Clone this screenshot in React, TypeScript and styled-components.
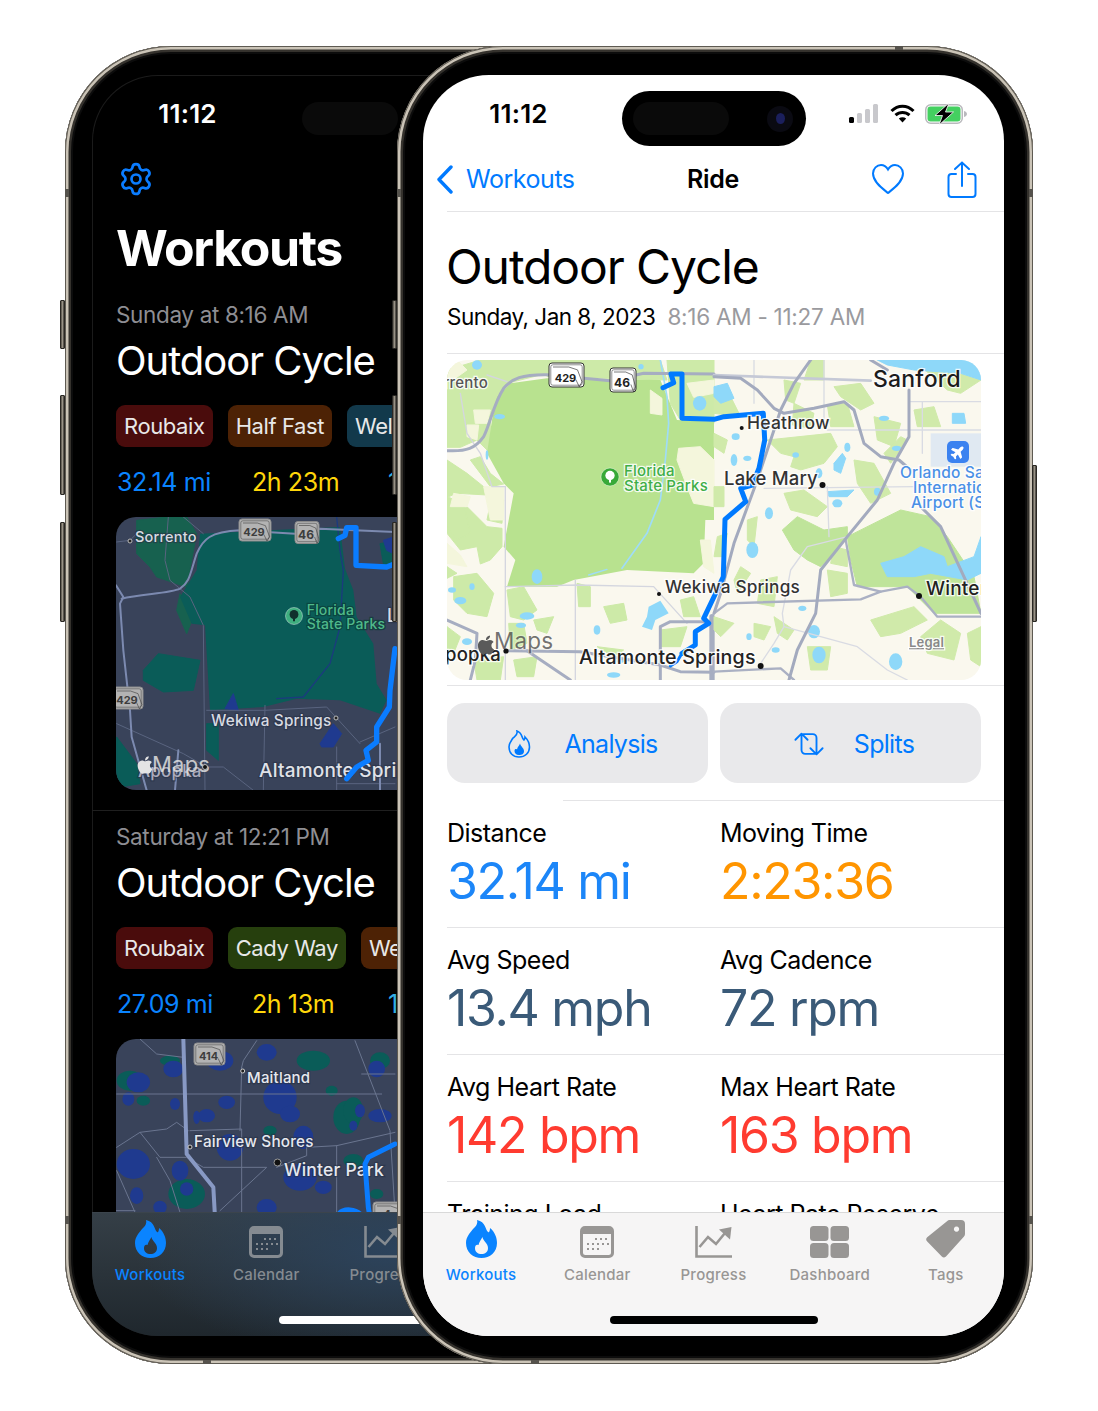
import React from 'react';
import styled, { createGlobalStyle } from 'styled-components';
import { Settings } from 'lucide-react';
import { FaApple, FaPlane } from 'react-icons/fa';

const BLUE = '#007aff';
const FONT = 'Inter, "Noto Sans", "Liberation Sans", sans-serif';

const GlobalStyle = createGlobalStyle`
    html, body {
        margin: 0;
        background: #fff;
    }
    #root {
        width: 1098px;
        height: 1411px;
        overflow: hidden;
    }
    * {
        box-sizing: border-box;
    }
`;

const Stage = styled.main`
    display: flex;
    width: 1098px;
    height: 1411px;
    padding: 46px 0 0 65px;
    background: #fff;
    font-family: ${FONT};
`;

const Phone = styled.section<{ $front?: boolean }>`
    position: relative;
    flex: 0 0 636px;
    height: 1318px;
    margin-left: ${(p) => (p.$front ? '-304px' : '0')};
    padding: 29px 0 28px ${(p) => (p.$front ? '26px' : '27px')};
    border-radius: 106px;
    background: #000;
    box-shadow: inset 0 0 0 1px #5e5a52, inset 0 0 0 3.5px #cbc4b7,
        inset 0 0 0 6px #35322d, inset 0 0 0 8px #0c0c0c;
`;

const SideButton = styled.i<{ $right?: boolean; $top: number; $h: number }>`
    position: absolute;
    top: ${(p) => p.$top}px;
    ${(p) => (p.$right ? 'right: -4px;' : 'left: -5px;')}
    width: 5px;
    height: ${(p) => p.$h}px;
    border-radius: 1px;
    background: linear-gradient(90deg, #45413a, #a29b8e 45%, #3a3733);
    border: 1px solid #2a2824;
`;

const Band = styled.i<{ $x?: number; $y?: number; $right?: boolean; $bottom?: boolean }>`
    position: absolute;
    background: #55524c;
    ${(p) =>
        p.$x !== undefined
            ? `left: ${p.$x}px; width: 8px; height: 4px; ${p.$bottom ? 'bottom: 0;' : 'top: 0;'}`
            : `top: ${p.$y}px; height: 8px; width: 4px; ${p.$right ? 'right: 0;' : 'left: 0;'}`}
`;

const Screen = styled.div<{ $dark?: boolean }>`
    display: flex;
    flex-direction: column;
    width: 581px;
    height: 1261px;
    border-radius: 66px;
    overflow: hidden;
    background: ${(p) => (p.$dark ? '#000' : '#fff')};
    color: ${(p) => (p.$dark ? '#fff' : '#000')};
    ${(p) => p.$dark && 'box-shadow: inset 0 0 0 1px #1b1b1b;'}
`;

const StatusBar = styled.header`
    flex: 0 0 72px;
    display: grid;
    grid-template-columns: 199px 184px 1fr;
    padding-top: 16px;
`;

const Clock = styled.div`
    height: 55px;
    padding-right: 8px;
    text-align: center;
    font-size: 26px;
    font-weight: 600;
    line-height: 46px;
    letter-spacing: 0.2px;
`;

const Island = styled.div`
    display: flex;
    align-items: center;
    justify-content: space-between;
    height: 55px;
    padding: 0 13px 0 11px;
    border-radius: 28px;
    background: #000;
`;

const IslandPill = styled.span`
    width: 96px;
    height: 33px;
    border-radius: 17px;
    background: #0a0a0a;
`;

const Camera = styled.span`
    display: flex;
    align-items: center;
    justify-content: center;
    width: 26px;
    height: 26px;
    border-radius: 50%;
    background: #0a0a12;
`;

const Lens = styled.span`
    width: 9px;
    height: 11px;
    border-radius: 50%;
    background: #1b1f5c;
`;

const StatusIcons = styled.div`
    display: flex;
    align-items: flex-start;
    gap: 12px;
    padding: 13px 0 0 43px;
    svg {
        overflow: visible;
    }
`;

const WifiWrap = styled.span`
    display: block;
    margin-right: -2px;
`;

const NavBar = styled.nav`
    flex: 0 0 64px;
    display: grid;
    grid-template-columns: 251px auto 1fr;
    align-items: center;
    height: 64px;
    padding: 0 27px 0 13px;
`;

const BackLink = styled.div`
    display: flex;
    align-items: center;
    gap: 13px;
    color: ${BLUE};
    font-size: 25px;
    letter-spacing: -0.45px;
`;

const NavTitle = styled.div`
    font-size: 25px;
    font-weight: 600;
    letter-spacing: -0.3px;
`;

const NavActions = styled.div`
    display: flex;
    justify-content: flex-end;
    align-items: center;
    gap: 43px;
`;

const Divider = styled.hr<{ $inset?: number }>`
    flex: 0 0 1px;
    width: auto;
    height: 1px;
    margin: 0 0 0 ${(p) => p.$inset ?? 24}px;
    border: 0;
    background: #e4e4e6;
`;

const Body = styled.div`
    flex: 1;
    min-height: 0;
    display: flex;
    flex-direction: column;
    overflow: hidden;
`;

const Heading = styled.div`
    padding: 26px 24px 21px;
`;

const PageTitle = styled.h1`
    margin: 0 0 0 -1px;
    font-size: 48px;
    font-weight: 400;
    line-height: 58px;
    letter-spacing: -1.1px;
`;

const DateLine = styled.div`
    display: flex;
    gap: 12px;
    margin-top: 6px;
    font-size: 22.5px;
    line-height: 30px;
    letter-spacing: -0.53px;
`;

const Muted = styled.span`
    color: #9a9a9e;
    letter-spacing: -0.25px;
`;

const MapSection = styled.div`
    padding: 6px 23px 5px 24px;
`;

const MapFrame = styled.div<{ $h: number }>`
    flex-shrink: 0;
    width: 534px;
    height: ${(p) => p.$h}px;
    border-radius: 20px;
    overflow: hidden;
    svg {
        display: block;
    }
`;

const MapText = styled.text<{ $size: number; $fill?: string; $halo?: string; $weight?: number }>`
    font-family: ${FONT};
    font-size: ${(p) => p.$size}px;
    font-weight: ${(p) => p.$weight ?? 500};
    fill: ${(p) => p.$fill ?? '#222'};
    stroke: ${(p) => p.$halo ?? 'rgba(255,255,255,.85)'};
    stroke-width: 2.5px;
    paint-order: stroke;
    letter-spacing: 0.2px;
`;

const ActionRow = styled.div`
    display: grid;
    grid-template-columns: 261px 261px;
    gap: 12px;
    padding: 17px 24px;
`;

const ActionButton = styled.button`
    display: flex;
    align-items: center;
    justify-content: center;
    gap: 30px;
    height: 80px;
    padding: 1px 0 0 7px;
    border: 0;
    border-radius: 18px;
    background: #e9e9eb;
    color: ${BLUE};
    font-family: ${FONT};
    font-size: 25px;
    letter-spacing: -0.7px;
`;

const IconSlot = styled.span`
    display: flex;
    justify-content: center;
    width: 30px;
`;

const StatRow = styled.div`
    flex-shrink: 0;
    display: grid;
    grid-template-columns: 273px 1fr;
    height: 126px;
    padding: 16px 0 0 24px;
`;

const StatLabel = styled.div`
    font-size: 25px;
    line-height: 32px;
    letter-spacing: -0.5px;
`;

const StatValue = styled.div<{ $color: string }>`
    margin-top: 2px;
    color: ${(p) => p.$color};
    font-size: 50px;
    line-height: 60px;
    letter-spacing: -1.3px;
`;

const TabBar = styled.footer<{ $dark?: boolean }>`
    flex: 0 0 124px;
    display: flex;
    flex-direction: column;
    border-top: 1px solid ${(p) => (p.$dark ? '#3b444c' : '#d9d9d9')};
    background: ${(p) =>
        p.$dark
            ? 'radial-gradient(ellipse 260px 110px at 52% 30%, #2c435c, transparent), linear-gradient(180deg, #353f47, #1f272d)'
            : '#f6f5f5'};
`;

const TabRow = styled.div`
    display: grid;
    grid-template-columns: repeat(5, 1fr);
    padding-top: 7px;
`;

const Tab = styled.div<{ $active?: boolean; $dark?: boolean }>`
    display: flex;
    flex-direction: column;
    align-items: center;
    color: ${(p) => (p.$active ? '#0a84ff' : p.$dark ? '#858b91' : '#989694')};
    font-size: 15px;
    font-weight: 500;
    letter-spacing: 0.25px;
`;

const TabIcon = styled.span`
    display: flex;
    align-items: flex-end;
    height: 38px;
    margin-bottom: 7px;
`;

const TabLabel = styled.span`
    line-height: 20px;
`;

const HomeBar = styled.div<{ $dark?: boolean }>`
    width: 208px;
    height: 8px;
    margin: auto auto 12px;
    border-radius: 4px;
    background: ${(p) => (p.$dark ? '#fff' : '#000')};
`;

const GearRow = styled.div`
    flex-shrink: 0;
    height: 34px;
    margin: 14px 0 0 26px;
    color: #0a7cff;
`;

const BigTitle = styled.h1`
    flex-shrink: 0;
    margin: 24px 0 11px 24px;
    font-size: 50px;
    font-weight: 700;
    line-height: 58px;
    letter-spacing: -1.35px;
`;

const Card = styled.article<{ $first?: boolean }>`
    flex-shrink: 0;
    padding: 12px 0 20px 24px;
    border-top: 1px solid ${(p) => (p.$first ? 'transparent' : '#1f1f1f')};
`;

const CardDate = styled.div`
    color: #8e8e93;
    font-size: 22.5px;
    line-height: 28px;
    letter-spacing: -0.35px;
`;

const CardTitle = styled.h2`
    margin: 7px 0 0;
    font-size: 40px;
    font-weight: 400;
    line-height: 50px;
    letter-spacing: -1.05px;
`;

const TagRow = styled.div`
    display: flex;
    gap: 15px;
    margin-top: 19px;
    width: 700px;
`;

const Tag = styled.span<{ $bg: string }>`
    height: 42px;
    padding: 0 8px;
    border-radius: 9px;
    background: ${(p) => p.$bg};
    color: #e8e8e8;
    font-size: 22px;
    line-height: 42px;
    letter-spacing: -0.4px;
`;

const CardStats = styled.div`
    display: grid;
    grid-template-columns: 135px 136px auto;
    margin: 20px 0;
    width: 600px;
    font-size: 25px;
    line-height: 30px;
    letter-spacing: -0.4px;
`;

const CardStat = styled.span<{ $color: string }>`
    padding-left: 1px;
    color: ${(p) => p.$color};
`;

// map traced from the reference, in zoomed coordinates (3x the map size)
type Ellipse = [number, number, number, number];

const Polys = ({ items, fill }: { items: string[]; fill: string }) => (
    <>
        {items.map((points) => (
            <polygon key={points} points={points} fill={fill} stroke={fill} strokeWidth={3} strokeLinejoin="round" />
        ))}
    </>
);

const Blobs = ({ items, fill }: { items: Ellipse[]; fill: string }) => (
    <>
        {items.map(([cx, cy, rx, ry]) => (
            <ellipse key={`${cx}-${cy}`} cx={cx} cy={cy} rx={rx} ry={ry} fill={fill} />
        ))}
    </>
);

const Roads = ({ items, stroke, width }: { items: string[]; stroke: string; width: number }) => (
    <>
        {items.map((d) => (
            <path key={d} d={d} fill="none" stroke={stroke} strokeWidth={width} strokeLinejoin="round" strokeLinecap="round" />
        ))}
    </>
);

function Shield({ x, y, w, h, label, dark }: { x: number; y: number; w: number; h: number; label: string; dark?: boolean }) {
    const ink = dark ? '#3d3d3d' : '#222';
    return (
        <g>
            <rect x={x} y={y} width={w} height={h} rx={3} fill={dark ? '#b3b3b3' : '#fff'} stroke={dark ? '#8a8a8a' : '#333'} strokeWidth={1} />
            <rect x={x + 1.8} y={y + 1.8} width={w - 3.6} height={h - 3.6} rx={2} fill="none" stroke={ink} strokeWidth={0.5} />
            <path
                d={`M${x + 4} ${y + 4} h${w * 0.45} l${w * 0.25} ${h * 0.12} l${w * 0.13} ${h * 0.5} l${-w * 0.08} ${h * 0.2} l${-w * 0.1} ${-h * 0.3}`}
                fill="none"
                stroke={ink}
                strokeWidth={0.6}
            />
            <text
                x={x + w / 2 - 1}
                y={y + h - 5}
                textAnchor="middle"
                fontFamily={FONT}
                fontSize={label.length > 2 ? 11 : 12}
                fontWeight={700}
                fill={ink}
            >
                {label}
            </text>
        </g>
    );
}

function ParkIcon({ cx, cy, r, bg, tree }: { cx: number; cy: number; r: number; bg: string; tree: string }) {
    return (
        <g>
            <circle cx={cx} cy={cy} r={r} fill={bg} stroke="rgba(255,255,255,.5)" strokeWidth={0.8} />
            <circle cx={cx} cy={cy - 1.5} r={r * 0.52} fill={tree} />
            <rect x={cx - 1} y={cy} width={2} height={r * 0.62} fill={tree} />
        </g>
    );
}

const LIGHT_LEFT_GREEN = [
    '0,30 100,0 300,0 300,40 180,70 130,170 130,280 90,240 40,262 0,262',
    '300,0 640,0 660,60 300,50',
    '660,0 801,0 801,190 700,180 670,130',
    '100,290 130,340 170,372 130,380 70,300',
    '0,300 60,340 110,380 120,405 30,400 0,412',
    '0,460 60,440 120,500 165,505 165,560 130,600 100,612 90,560 40,570 0,520',
    '0,620 30,640 0,655',
    '20,650 90,640 140,700 120,770 60,760 20,720',
    '180,690 230,680 270,750 230,780 190,770',
    '185,790 230,790 240,850 190,870',
    '470,740 530,730 540,780 490,790',
    '390,670 430,680 430,740 395,740',
    '640,810 720,800 700,860 640,860',
    '0,800 40,830 20,880 0,870',
    '80,900 170,890 160,960 90,960',
    '450,860 530,870 500,890',
    '0,410 50,430 70,520 30,540 0,500',
    '130,430 170,420 165,490 120,480',
    '700,720 740,710 760,770 710,770',
    '260,780 320,770 300,820 270,810',
    '200,900 270,890 260,950 210,950',
];

const PARK_LEFT =
    '150,110 190,70 300,55 640,60 690,180 801,185 801,480 775,480 770,610 740,640 540,630 380,660 330,680 180,680 205,600 170,560 200,400 170,370 120,280 135,180';

const CREAM_LEFT = [
    '720,70 801,60 801,100 740,112',
    '610,90 645,115 645,165 610,160',
    '695,265 760,260 801,300 801,440 740,430 720,380 690,300',
    '80,150 130,150 120,190 85,190',
    '760,540 790,540 801,640 770,620',
    '20,400 70,410 60,440 10,440',
    '110,380 170,380 170,480 130,480',
    '0,0 30,0 60,30 25,55 0,60',
    '60,195 95,195 90,240 60,230',
    '0,550 40,585 60,620 0,610',
];

const WATER_LEFT: Ellipse[] = [
    [90, 15, 15, 14],
    [158, 170, 16, 8],
    [120, 285, 4, 14],
    [270, 650, 16, 22],
    [450, 810, 10, 14],
    [40, 722, 18, 11],
    [75, 680, 8, 10],
    [240, 768, 22, 11],
    [222, 796, 15, 8],
    [60, 845, 15, 10],
    [520, 902, 12, 6],
    [500, 945, 20, 8],
    [758, 130, 20, 22],
    [582, 20, 8, 8],
    [15, 690, 12, 8],
];

const GREEN_RIGHT = [
    '290,0 330,0 330,60 270,60',
    '360,80 440,70 480,130 440,150 380,110',
    '160,240 350,220 370,260 330,310 260,330 230,320 240,290 200,280',
    '210,400 270,390 340,440 310,470 230,450',
    '420,300 480,310 530,400 470,430 430,370',
    '600,0 801,60 740,100 700,90',
    '470,780 600,740 640,780 560,820 500,830',
    '680,780 740,820 720,900 640,880 620,830',
    '760,820 801,800 801,920 770,900',
    '340,630 400,640 400,700 350,710',
    '0,100 50,110 80,170 0,160',
    '0,220 40,240 30,280 0,260',
    '0,380 30,380 30,440 0,440',
    '180,770 240,810 220,840 190,820',
    '280,860 350,860 340,930 290,930',
    '600,150 660,140 680,200 610,200',
    '100,480 130,470 120,560 100,540',
    '0,770 60,790 20,830 0,810',
    '480,170 560,190 540,260 490,240',
    '120,790 170,800 150,840 120,830',
    '210,60 260,70 240,130 215,120',
    '340,135 400,130 420,200 350,200',
    '240,130 300,160 290,205 235,195',
    '560,230 580,240 530,310 510,280',
    '80,620 110,640 70,700 60,660',
    '140,660 190,650 180,740 130,730',
    '360,560 400,570 400,620 350,610',
    '10,530 40,520 30,590 0,590',
];

const PARK_RIGHT = [
    '400,530 560,450 650,470 700,530 780,650 801,760 660,760 610,710 580,680 430,680 410,600',
    '250,470 330,510 400,500 400,530 370,570 320,620 280,600 240,570 205,510',
];

const WATER_RIGHT_POLYS = [
    '490,0 780,0 801,20 801,60 740,40 600,30 520,15',
    '500,610 570,590 620,560 690,590 700,620 780,590 801,530 801,640 760,660 650,640 600,650 520,650',
    '0,80 40,70 60,115 20,130 0,110',
    '360,310 385,280 395,295 380,340 360,330',
    '340,395 420,390 400,410 345,410',
    '715,160 750,160 755,190 715,190',
];

const WATER_RIGHT: Ellipse[] = [
    [400, 262, 9, 14],
    [510, 175, 15, 8],
    [370, 430, 15, 12],
    [300, 815, 18, 20],
    [265, 745, 12, 8],
    [115, 570, 18, 24],
    [165, 460, 12, 18],
    [65, 230, 12, 10],
    [60, 300, 10, 18],
    [100, 295, 12, 8],
    [545, 905, 20, 25],
    [315, 885, 20, 25],
    [105, 830, 8, 10],
    [185, 870, 12, 8],
    [490, 395, 10, 12],
    [245, 285, 10, 8],
    [315, 340, 10, 15],
    [548, 265, 14, 8],
];

const ROUTE_MAIN =
    '216,27.7 226.7,22.7 224,14 235,14 235,58.3 267,59.3 277,56.7 316.3,53.3 317.7,80 312,108.3 305.3,125 293.7,128.3 298.7,141.7 278,159.3 276.3,216.7 267,236.7 256.7,258.3 261.7,263.3 248.3,271.7 248.3,285 235,293.3';

function SummaryMap() {
    return (
        <svg width={534} height={320} viewBox="0 0 534 320">
            <rect width={534} height={320} fill="#faf8ee" />
            <g transform="scale(0.33333)">
                <Polys items={LIGHT_LEFT_GREEN} fill="#cdeaa8" />
                <polygon points={PARK_LEFT} fill="#b8e28f" />
                <Polys items={CREAM_LEFT} fill="#f4f6dc" />
                <Blobs items={WATER_LEFT} fill="#8ed8f9" />
                <polygon points="605,740 640,722 665,760 625,780 615,810 585,800 600,770" fill="#8ed8f9" />
                <Roads items={['M640 0 L660 110 L665 190 L655 300 L640 420 L600 520 L525 625']} stroke="#9fdcf8" width={5} />
                <Roads items={['M425 645 L480 628']} stroke="#9fdcf8" width={4} />
                <Roads
                    items={[
                        'M175 380 L175 960',
                        'M175 680 L390 675 L620 680 L720 790',
                        'M385 660 L385 960',
                        'M40 100 L60 220 L100 280 L135 380 L175 380',
                        'M120 45 L180 65',
                    ]}
                    stroke="#d4d6df"
                    width={4}
                />
                <Roads
                    items={[
                        'M0 272 C60 275 85 265 110 230 C130 190 140 130 170 85 C195 55 225 43 300 44 L490 62 L590 40 L801 42',
                        'M0 780 L90 820 L85 900 L70 960',
                        'M180 872 L400 875 L640 915 L700 935 L801 937',
                        'M240 872 L370 960',
                        'M640 960 L640 800 L670 785 L790 785',
                    ]}
                    stroke="#a6adc1"
                    width={9}
                />
                <Roads items={['M795 770 L795 960']} stroke="#a6adc1" width={16} />
            </g>
            <g transform="translate(267 0) scale(0.33333)">
                <Polys items={GREEN_RIGHT} fill="#d0eaaa" />
                <Polys items={PARK_RIGHT} fill="#bfe49a" />
                <rect x={650} y={220} width={151} height={100} fill="#e0e9f2" />
                <Polys items={WATER_RIGHT_POLYS} fill="#8ed8f9" />
                <Blobs items={WATER_RIGHT} fill="#8ed8f9" />
                <Roads
                    items={[
                        'M150 385 L600 380',
                        'M340 210 L801 210',
                        'M625 125 L625 280',
                        'M590 125 L801 125',
                        'M400 530 L280 560 L230 630 L205 760 L210 800 L180 850 L140 910',
                        'M210 800 L430 860 L520 930 L580 960',
                        'M330 0 L330 180',
                        'M120 0 L120 130',
                        'M340 380 L345 530',
                    ]}
                    stroke="#d9dbe3"
                    width={4}
                />
                <Roads items={['M0 45 L470 62']} stroke="#c5c9d6" width={8} />
                <Roads
                    items={[
                        'M395 540 L420 675 L500 695 L580 680 L620 710 L670 770 L801 770',
                        'M0 760 L40 730 L440 718 L500 695',
                        'M0 935 L200 925 L240 960',
                    ]}
                    stroke="#aab0c3"
                    width={7}
                />
                <Roads
                    items={[
                        'M0 50 L80 55 L130 90 L180 145 L210 160 L300 145 L390 125 L420 150 L450 250 L500 290 L555 300 L590 330',
                        'M290 0 L240 70 L200 150 L130 360 L60 550 L20 700 L0 760',
                        'M585 90 L585 230 L540 310 L490 420 L400 530 L320 630 L305 760 L250 870 L225 960',
                        'M620 440 L680 500 L801 760',
                        'M470 0 L520 30',
                    ]}
                    stroke="#a3aabe"
                    width={9}
                />
            </g>
            <polyline points={ROUTE_MAIN} fill="none" stroke={BLUE} strokeWidth={5} strokeLinejoin="round" strokeLinecap="round" />
            <polyline points="235,293.3 230,301.7 223.3,306" fill="none" stroke={BLUE} strokeWidth={3} strokeLinecap="round" />
            <Shield x={102} y={3} w={35} h={24} label="429" />
            <Shield x={163} y={8} w={26} h={24} label="46" />
            <MapText x={41} y={28} $size={15} $fill="#555" textAnchor="end">Sorrento</MapText>
            <MapText x={426} y={27} $size={23} $fill="#1c1c1c" $weight={500}>Sanford</MapText>
            <MapText x={300} y={69} $size={17.5} $fill="#333">Heathrow</MapText>
            <MapText x={277} y={125} $size={18.5} $fill="#333">Lake Mary</MapText>
            <MapText x={177} y={116} $size={15} $fill="#3fae47">Florida</MapText>
            <MapText x={177} y={131} $size={15} $fill="#3fae47">State Parks</MapText>
            <ParkIcon cx={163} cy={117} r={9} bg="#38a938" tree="#fff" />
            <MapText x={218} y={233} $size={17.2} $fill="#333">Wekiwa Springs</MapText>
            <MapText x={132} y={304} $size={19.6} $fill="#222">Altamonte Springs</MapText>
            <MapText x={54} y={301} $size={18.5} $fill="#222" textAnchor="end">Apopka</MapText>
            <MapText x={453} y={118} $size={15.5} $fill="#4a90e6">Orlando Sanford</MapText>
            <MapText x={466} y={133} $size={15.5} $fill="#4a90e6">International</MapText>
            <MapText x={464} y={148} $size={15.5} $fill="#4a90e6">Airport (SFB)</MapText>
            <MapText x={479} y={235} $size={19} $fill="#222">Winter Springs</MapText>
            <MapText x={462} y={287} $size={13} $fill="#888" textDecoration="underline" $weight={600}>Legal</MapText>
            <FaApple x={28} y={274} size={22} color="#5a5a5a" />
            <MapText x={47} y={289} $size={22.5} $fill="rgba(70,70,70,.75)" $halo="rgba(255,255,255,.3)" $weight={400}>Maps</MapText>
            <circle cx={212} cy={234} r={2} fill="#111" />
            <circle cx={294.7} cy={68} r={2} fill="#111" />
            <circle cx={375.5} cy={125} r={3} fill="#111" />
            <circle cx={313.7} cy={306} r={3} fill="#111" />
            <circle cx={472} cy={236} r={3} fill="#111" />
            <circle cx={59} cy={291} r={2.6} fill="#111" />
            <rect x={500} y={81} width={22} height={22} rx={5} fill="#3b82f0" />
            <g transform="rotate(-45 511 92)">
                <FaPlane x={503.5} y={84.5} size={15} color="#fff" />
            </g>
        </svg>
    );
}

const DARK_ROAD = '#7c8ab0';
const DARK_THIN = '#596480';
const DARK_WATER = '#1f3a8f';
const DARK_GREEN = '#0a5c58';
const DARK_HALO = 'rgba(40,50,70,.6)';

function DarkMapOne() {
    return (
        <svg width={534} height={273} viewBox="0 0 534 273">
            <rect width={534} height={273} fill="#39435a" />
            <g transform="translate(-16 -6.67) scale(0.33333)">
                <Polys
                    items={[
                        '110,30 200,20 260,20 290,70 260,230 170,200 150,170 110,130',
                        '240,250 280,320 260,370 230,300',
                    ]}
                    fill="#17614f"
                />
                <polygon
                    points="300,70 720,50 735,175 760,240 770,320 820,400 830,520 860,570 840,610 720,570 590,565 490,590 330,600 315,345 275,340 240,260 290,180"
                    fill={DARK_GREEN}
                />
                <Polys
                    items={[
                        '130,480 175,430 300,450 280,540 190,545 130,510',
                        '320,640 355,640 355,750 320,720',
                        '50,680 110,760 120,820 60,830 50,790',
                        '840,100 885,90 885,170 850,160',
                    ]}
                    fill={DARK_GREEN}
                />
                <Polys
                    items={['375,595 400,550 415,600', '660,700 700,640 725,670 700,710 665,710', '850,90 880,80 880,130 860,120']}
                    fill={DARK_WATER}
                />
                <Roads items={['M710 20 L720 120 L730 180 L720 350 L690 460 L610 560 L530 565']} stroke="#1b3b7e" width={4} />
                <Roads
                    items={[
                        'M50 95 L90 90 L110 70',
                        'M205 20 L195 150 L210 210 L270 260 L310 345 L315 840',
                        'M320 600 L495 600 L680 590 L780 700',
                        'M495 585 L490 840',
                        'M50 640 L250 730 L320 770 L370 770 L460 840',
                        'M710 710 L710 840',
                        'M780 695 L885 650',
                        'M710 820 L885 820',
                        'M250 20 L310 70',
                    ]}
                    stroke={DARK_THIN}
                    width={3}
                />
                <Roads
                    items={[
                        'M48 225 L70 260 L60 280 L70 420 L90 600 L95 680 L140 840',
                        'M65 265 C120 250 210 250 240 235 C270 215 270 190 290 130 C310 85 330 65 420 60 L585 70 L660 55 L885 65',
                        'M840 700 L840 840',
                        'M225 840 L235 720',
                    ]}
                    stroke={DARK_ROAD}
                    width={6}
                />
            </g>
            <Shield dark x={123} y={2} w={32} h={22} label="429" />
            <Shield dark x={179} y={4.5} w={24} h={22} label="46" />
            <Shield dark x={-3} y={170} w={30} h={22} label="429" />
            <MapText x={19} y={25} $size={14.5} $fill="#d8dbe2" $halo={DARK_HALO}>Sorrento</MapText>
            <circle cx={14} cy={24} r={2} fill="#222" stroke="#bbb" />
            <ParkIcon cx={178} cy={99} r={8.5} bg="#3fae7f" tree="#10302c" />
            <MapText x={190.7} y={98} $size={14} $fill="#50b98a" $halo="rgba(10,60,55,.7)">Florida</MapText>
            <MapText x={190.7} y={112} $size={14} $fill="#50b98a" $halo="rgba(10,60,55,.7)">State Parks</MapText>
            <MapText x={271} y={105} $size={18} $fill="#d8dbe2" $halo={DARK_HALO}>Lake Mary</MapText>
            <MapText x={95} y={209} $size={15.3} $fill="#d8dbe2" $halo={DARK_HALO}>Wekiwa Springs</MapText>
            <circle cx={220} cy={201} r={2} fill="#222" stroke="#bbb" />
            <MapText x={143} y={260} $size={19} $fill="#e0e2e8" $halo={DARK_HALO}>Altamonte Springs</MapText>
            <MapText x={22} y={260} $size={17} $fill="#aab" $halo={DARK_HALO}>Apopka</MapText>
            <FaApple x={19} y={238} size={20} color="#e4e4e4" />
            <MapText x={36} y={255} $size={22} $fill="rgba(225,225,225,.85)" $halo="transparent" $weight={400}>Maps</MapText>
            <circle cx={89} cy={250} r={2.5} fill="#111" stroke="#bbb" />
            <g transform="translate(-16 -6.67) scale(0.33333)">
                <Roads
                    items={[
                        'M715 85 L735 75 L740 52 L768 52 L768 165 L860 170 L885 160',
                        'M885 415 L870 540 L868 590 L830 650 L830 695 L798 720 L805 750 L770 770 L740 805',
                    ]}
                    stroke="#0a7cff"
                    width={16}
                />
            </g>
        </svg>
    );
}

const DARK_TWO_WATER: Ellipse[] = [
    [235, 155, 35, 30],
    [340, 115, 30, 25],
    [480, 90, 40, 30],
    [620, 65, 30, 25],
    [660, 200, 50, 50],
    [690, 250, 30, 25],
    [205, 205, 18, 20],
    [345, 220, 15, 18],
    [500, 215, 25, 20],
    [440, 255, 25, 20],
    [410, 260, 10, 20],
    [510, 350, 40, 40],
    [220, 400, 50, 45],
    [360, 420, 25, 30],
    [730, 320, 30, 35],
    [720, 440, 50, 40],
    [790, 470, 25, 20],
    [620, 530, 30, 25],
    [300, 530, 20, 20],
    [230, 495, 20, 25],
    [950, 115, 25, 25],
    [960, 255, 35, 20],
    [900, 240, 15, 20],
    [880, 285, 12, 15],
    [380, 475, 20, 20],
];

const DARK_TWO_GREEN: Ellipse[] = [
    [760, 90, 50, 30],
    [210, 150, 40, 30],
    [250, 210, 20, 15],
    [860, 260, 40, 50],
    [880, 240, 30, 40],
    [380, 490, 55, 45],
    [815, 180, 18, 15],
    [630, 300, 20, 15],
    [330, 90, 30, 15],
    [960, 90, 30, 25],
    [880, 390, 30, 20],
    [950, 490, 20, 15],
];

function DarkMapTwo() {
    return (
        <svg width={534} height={273} viewBox="0 0 534 273">
            <rect width={534} height={273} fill="#39435a" />
            <g transform="translate(-56 -8.33) scale(0.33333)">
                <Blobs items={DARK_TWO_GREEN} fill={DARK_GREEN} />
                <Blobs items={DARK_TWO_WATER} fill={DARK_WATER} />
                <Roads
                    items={[
                        'M240 25 L290 70 L370 80',
                        'M170 190 L965 190',
                        'M390 300 L545 295 L545 545',
                        'M545 110 L540 300',
                        'M590 30 L550 90 L545 110',
                        'M170 350 L240 305 L320 295 L350 275 L385 300',
                        'M240 305 L300 380 L380 380 L430 410 L620 410 L480 540',
                        'M290 380 L330 450 L360 545',
                        'M170 420 L225 545',
                        'M885 30 L990 300 L1005 545',
                        'M740 350 L830 345 L1005 305',
                        'M740 345 L740 375 L650 410',
                        'M830 345 L830 545',
                        'M905 130 L1005 130',
                        'M168 540 L225 540',
                    ]}
                    stroke="#6a7590"
                    width={3}
                />
                <Roads items={['M370 25 L380 370 L460 470 L465 560']} stroke="#8899c4" width={12} />
            </g>
            <Shield dark x={78} y={4} w={31} h={22} label="414" />
            <Shield dark x={257} y={163} w={30} h={22} label="4" />
            <circle cx={126.7} cy={32} r={2} fill="#222" stroke="#ccc" />
            <MapText x={131} y={44} $size={15} $fill="#e6e8ee" $halo={DARK_HALO}>Maitland</MapText>
            <circle cx={74} cy={108} r={2} fill="#222" stroke="#ccc" />
            <MapText x={78} y={108} $size={15.3} $fill="#e6e8ee" $halo={DARK_HALO}>Fairview Shores</MapText>
            <circle cx={161.5} cy={123.5} r={3.5} fill="#111" stroke="#999" />
            <MapText x={168} y={137} $size={17.5} $fill="#e6e8ee" $halo={DARK_HALO}>Winter Park</MapText>
            <g transform="translate(-56 -8.33) scale(0.33333)">
                <Roads
                    items={['M1005 340 L925 380 L915 400 L925 530 L930 560', 'M835 552 C850 530 890 535 905 555']}
                    stroke="#0a7cff"
                    width={15}
                />
            </g>
        </svg>
    );
}

function WorkoutCard({
    first,
    date,
    tags,
    distance,
    time,
    map,
}: {
    first?: boolean;
    date: string;
    tags: [string, string][];
    distance: string;
    time: string;
    map: React.ReactNode;
}) {
    return (
        <Card $first={first}>
            <CardDate>{date}</CardDate>
            <CardTitle>Outdoor Cycle</CardTitle>
            <TagRow>
                {tags.map(([label, bg]) => (
                    <Tag key={label} $bg={bg}>
                        {label}
                    </Tag>
                ))}
            </TagRow>
            <CardStats>
                <CardStat $color="#0a84ff">{distance}</CardStat>
                <CardStat $color="#ffd60a">{time}</CardStat>
                <CardStat $color="#32ade6">1,250 ft</CardStat>
            </CardStats>
            <MapFrame $h={273}>{map}</MapFrame>
        </Card>
    );
}

function FlameIcon() {
    return (
        <svg width={31} height={38} viewBox="0 0 31 38">
            <path
                fill="currentColor"
                fillRule="evenodd"
                d="M11 0C20 2 19 9 22 12C23 13 24 11 24 8C29 12 31 18 31 23C31 32 24 38 15.5 38C7 38 0 32 0 23C0 17 4 13 7 9C10 6 12 4 11 0ZM16.5 17C17 21 22 23 22 28C22 32 19 34 15.5 34C12 34 9 32 9 28C9 25 11 24 12.5 25C13 22 15 20 16.5 17Z"
            />
        </svg>
    );
}

function CalendarIcon() {
    const dots = [
        [16, 13], [21, 13], [26, 13],
        [8, 18], [13, 18], [18, 18], [23, 18], [28, 18],
        [8, 23], [13, 23], [18, 23],
    ];
    return (
        <svg width={34} height={32} viewBox="0 0 34 32">
            <path
                fill="currentColor"
                fillRule="evenodd"
                d="M5 0H29a5 5 0 0 1 5 5V27a5 5 0 0 1-5 5H5a5 5 0 0 1-5-5V5a5 5 0 0 1 5-5ZM3 8V26.5a2.5 2.5 0 0 0 2.5 2.5H28.5a2.5 2.5 0 0 0 2.5-2.5V8Z"
            />
            {dots.map(([x, y]) => (
                <rect key={`${x}-${y}`} x={x - 1} y={y - 1} width={2} height={2} fill="currentColor" />
            ))}
        </svg>
    );
}

function ProgressIcon() {
    return (
        <svg width={37} height={32} viewBox="0 0 37 32">
            <path d="M1.5 0V30.5H37" fill="none" stroke="currentColor" strokeWidth={2.6} />
            <path d="M4.5 21L13 11L21 18L30 7" fill="none" stroke="currentColor" strokeWidth={2.6} />
            <path d="M24 3.5L36.5 1L35 13.5Z" fill="currentColor" />
        </svg>
    );
}

function DashboardIcon() {
    return (
        <svg width={39} height={32} viewBox="0 0 39 32">
            <rect x={0} y={0} width={18.5} height={15} rx={3.5} fill="currentColor" />
            <rect x={20.5} y={0} width={18.5} height={15} rx={3.5} fill="currentColor" />
            <rect x={0} y={17} width={18.5} height={15} rx={3.5} fill="currentColor" />
            <rect x={20.5} y={17} width={18.5} height={15} rx={3.5} fill="currentColor" />
        </svg>
    );
}

function TagIcon() {
    return (
        <svg width={40} height={38} viewBox="0 0 40 38">
            <path
                fill="currentColor"
                fillRule="evenodd"
                d="M24 0H35a4 4 0 0 1 4 4V14a4 4 0 0 1-1.2 2.8L20 36.5a3 3 0 0 1-4.2 0L1.2 21.5a3 3 0 0 1 0-4.2L21 1.2A4 4 0 0 1 24 0ZM30.5 6.5a2.6 2.6 0 1 0 0.01 0Z"
            />
        </svg>
    );
}

const TABS: [string, React.ReactNode][] = [
    ['Workouts', <FlameIcon />],
    ['Calendar', <CalendarIcon />],
    ['Progress', <ProgressIcon />],
    ['Dashboard', <DashboardIcon />],
    ['Tags', <TagIcon />],
];

function BottomTabs({ dark }: { dark?: boolean }) {
    return (
        <TabBar $dark={dark}>
            <TabRow>
                {TABS.map(([label, icon], i) => (
                    <Tab key={label} $active={i === 0} $dark={dark}>
                        <TabIcon>{icon}</TabIcon>
                        <TabLabel>{label}</TabLabel>
                    </Tab>
                ))}
            </TabRow>
            <HomeBar $dark={dark} />
        </TabBar>
    );
}

function Status({ dark }: { dark?: boolean }) {
    return (
        <StatusBar>
            <Clock>11:12</Clock>
            <Island>
                <IslandPill />
                <Camera>
                    <Lens />
                </Camera>
            </Island>
            {!dark && (
                <StatusIcons>
                    <svg width={29} height={19} viewBox="0 0 29 19">
                        <rect x={0} y={13} width={5} height={6} rx={1.5} fill="#000" />
                        <rect x={8} y={9} width={5} height={10} rx={1.5} fill="#c8c8cc" />
                        <rect x={16} y={5} width={5} height={14} rx={1.5} fill="#c8c8cc" />
                        <rect x={24} y={0} width={5} height={19} rx={1.5} fill="#c8c8cc" />
                    </svg>
                    <WifiWrap>
                        <svg width={25} height={19} viewBox="0 0 25 19">
                            <path d="M1.5 7C8 0.5 17 0.5 23.5 7" fill="none" stroke="#000" strokeWidth={3} />
                            <path d="M5.5 11.2C9.5 7.5 15.5 7.5 19.5 11.2" fill="none" stroke="#000" strokeWidth={3} />
                            <path d="M12.5 18.5L8.8 14.6C11 12.8 14 12.8 16.2 14.6Z" fill="#000" />
                        </svg>
                    </WifiWrap>
                    <svg width={42} height={20} viewBox="0 0 42 20">
                        <rect x={0.75} y={0.75} width={36.5} height={18.5} rx={5} fill="none" stroke="#b9b9bd" strokeWidth={1.5} />
                        <rect x={2.5} y={2.5} width={33} height={15} rx={3} fill="#44d060" />
                        <path d="M39 7V13C41 12.5 42 11 42 10C42 9 41 7.5 39 7Z" fill="#b9b9bd" />
                        <path d="M24 -1L10 11.5H17.5L14 21L28.5 8H20.5Z" fill="#000" stroke="#fff" strokeWidth={0.8} />
                    </svg>
                </StatusIcons>
            )}
        </StatusBar>
    );
}

const STATS: { label: string; value?: string; color: string }[][] = [
    [
        { label: 'Distance', value: '32.14 mi', color: '#1c86f8' },
        { label: 'Moving Time', value: '2:23:36', color: '#ff9500' },
    ],
    [
        { label: 'Avg Speed', value: '13.4 mph', color: '#3a5a78' },
        { label: 'Avg Cadence', value: '72 rpm', color: '#3a5a78' },
    ],
    [
        { label: 'Avg Heart Rate', value: '142 bpm', color: '#ff3b30' },
        { label: 'Max Heart Rate', value: '163 bpm', color: '#ff3b30' },
    ],
    [
        { label: 'Training Load', color: '#3a5a78' },
        { label: 'Heart Rate Reserve', color: '#3a5a78' },
    ],
];

function WorkoutsPhone() {
    return (
        <Phone>
            <SideButton $top={254} $h={49} />
            <SideButton $top={349} $h={100} />
            <SideButton $top={476} $h={100} />
            <Band $y={143} />
            <Band $y={1170} />
            <Band $x={138} $bottom />
            <Screen $dark>
                <Status dark />
                <Body>
                    <GearRow>
                        <Settings size={36} strokeWidth={1.8} />
                    </GearRow>
                    <BigTitle>Workouts</BigTitle>
                    <WorkoutCard
                        first
                        date="Sunday at 8:16 AM"
                        tags={[
                            ['Roubaix', '#4a0c0c'],
                            ['Half Fast', '#4d2205'],
                            ['Welaka', '#12394b'],
                        ]}
                        distance="32.14 mi"
                        time="2h 23m"
                        map={<DarkMapOne />}
                    />
                    <WorkoutCard
                        date="Saturday at 12:21 PM"
                        tags={[
                            ['Roubaix', '#4a0c0c'],
                            ['Cady Way', '#263f0d'],
                            ['Welaka', '#4d2205'],
                        ]}
                        distance="27.09 mi"
                        time="2h 13m"
                        map={<DarkMapTwo />}
                    />
                </Body>
                <BottomTabs dark />
            </Screen>
        </Phone>
    );
}

function RidePhone() {
    return (
        <Phone $front>
            <SideButton $top={254} $h={49} />
            <SideButton $top={349} $h={100} />
            <SideButton $top={476} $h={100} />
            <SideButton $right $top={419} $h={157} />
            <Band $y={143} />
            <Band $y={1170} />
            <Band $right $y={1170} />
            <Band $right $y={143} />
            <Band $x={134} $bottom />
            <Band $x={498} />
            <Screen>
                <Status />
                <NavBar>
                    <BackLink>
                        <svg width={17} height={29} viewBox="0 0 17 29">
                            <path d="M15 2L3 14.5L15 27" fill="none" stroke={BLUE} strokeWidth={3.4} strokeLinecap="round" strokeLinejoin="round" />
                        </svg>
                        Workouts
                    </BackLink>
                    <NavTitle>Ride</NavTitle>
                    <NavActions>
                        <svg width={32} height={30} viewBox="0 0 32 30">
                            <path
                                d="M16 29C11 25 1 18 1 9.5C1 4.5 5 1 9 1C12 1 14.5 3 16 5.5C17.5 3 20 1 23 1C27 1 31 4.5 31 9.5C31 18 21 25 16 29Z"
                                fill="none"
                                stroke={BLUE}
                                strokeWidth={2}
                            />
                        </svg>
                        <svg width={30} height={37} viewBox="0 0 30 37">
                            <path
                                d="M9 13H4.5a3 3 0 0 0-3 3V33a3 3 0 0 0 3 3H25.5a3 3 0 0 0 3-3V16a3 3 0 0 0-3-3H21M15 25V2M8 8L15 1.5L22 8"
                                fill="none"
                                stroke={BLUE}
                                strokeWidth={2}
                                strokeLinecap="round"
                            />
                        </svg>
                    </NavActions>
                </NavBar>
                <Divider />
                <Body>
                    <Heading>
                        <PageTitle>Outdoor Cycle</PageTitle>
                        <DateLine>
                            Sunday, Jan 8, 2023
                            <Muted>8:16 AM - 11:27 AM</Muted>
                        </DateLine>
                    </Heading>
                    <Divider />
                    <MapSection>
                        <MapFrame $h={320}>
                            <SummaryMap />
                        </MapFrame>
                    </MapSection>
                    <Divider />
                    <ActionRow>
                        <ActionButton>
                            <IconSlot>
                                <svg width={23} height={28} viewBox="0 0 23 28">
                                    <path
                                        d="M9 1C15 3 13 8 16 10C17 9 17 8 17 7C20 10 21.5 14 21.5 17C21.5 23 17 27 11 27C5 27 1 23 1 17C1 13 3 11 5 8C7 6 10 5 9 1Z"
                                        fill="none"
                                        stroke={BLUE}
                                        strokeWidth={1.6}
                                    />
                                    <path d="M12 13.5C13 17 16 18 16 21C16 24 14 25 11 25C8 25 6.5 23 6.5 21C6.5 19 8 18.5 9 19.5C9.5 17 11 16 12 13.5Z" fill={BLUE} />
                                </svg>
                            </IconSlot>
                            Analysis
                        </ActionButton>
                        <ActionButton>
                            <IconSlot>
                                <svg width={30} height={26} viewBox="0 0 32 27">
                                    <path
                                        d="M8 3V20a4 4 0 0 0 4 4H22M1.5 9L8 2.5L14.5 9M24 24V7a4 4 0 0 0-4-4H10M17.5 18L24 24.5L30.5 18"
                                        fill="none"
                                        stroke={BLUE}
                                        strokeWidth={2}
                                        strokeLinecap="round"
                                        strokeLinejoin="round"
                                    />
                                </svg>
                            </IconSlot>
                            Splits
                        </ActionButton>
                    </ActionRow>
                    <Divider $inset={140} />
                    {STATS.map((row) => (
                        <React.Fragment key={row[0].label}>
                            <StatRow>
                                {row.map((stat) => (
                                    <div key={stat.label}>
                                        <StatLabel>{stat.label}</StatLabel>
                                        {stat.value && <StatValue $color={stat.color}>{stat.value}</StatValue>}
                                    </div>
                                ))}
                            </StatRow>
                            <Divider />
                        </React.Fragment>
                    ))}
                </Body>
                <BottomTabs />
            </Screen>
        </Phone>
    );
}

export default function App() {
    return (
        <Stage>
            <GlobalStyle />
            <WorkoutsPhone />
            <RidePhone />
        </Stage>
    );
}
